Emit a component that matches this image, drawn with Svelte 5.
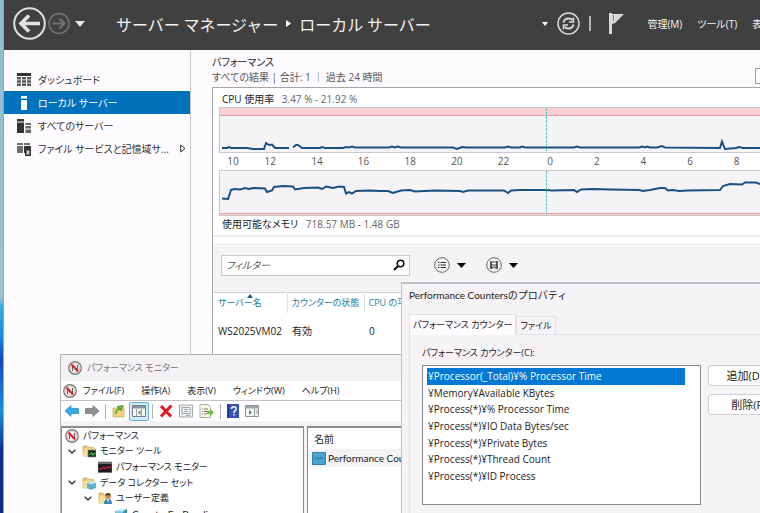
<script>
  const hours = ['10', '12', '14', '16', '18', '20', '22', '0', '2', '4', '6', '8'];

  const cpuLine =
    'M2 40 7 40 9 39 11 40 27 40 33 41 44 41 46 35 49 37 52 36.5 55 40 69 40M73 39.500 76 37 78 37 82 40 100 40 102 39 105 40 123 40 126 39 129 39.500 132 38.500 135 39.500 169 39.500 172 38.500 175 39.500 178 38.500 181 39.500 233 39.500 237 41 242 39 246 39.500 285 39.500 288 38.500 291 39.500 300 39.500 302 38.500 305 39.500 354 39.500 357 38.500 360 39.500 419 39.500 422 38.500 425 39.500 427 38.500 430 39.500 437 39.500 442 38 445 39.500 500 40 502 33.500 505 41 516 40 519 39 523 40 540 40';

  const memoryLine =
    'M2 27.500 8 28 11 19 14 18 20 18.500 25 17 29 18 33 17 45 17.500 47 21 52 19.500 54 16 63 15 73 15.500 75 18.500 84 17 98 16.500 102 18 106 15.500 113 17 119 15.500 124 16 126 22.500 129 21 132 22.500 136 20 150 19.500 160 20 168 20 173 22 181 19.500 190 19 195 20.500 215 19.500 240 20 243 21 248 19.500 284 19.500 288 22 291 19.500 300 19 326 19 332 19.500 354 19 357 21 361 18.500 372 18 390 18.500 419 19 423 20 430 19 440 17 445 17 448 19.500 453 19 459 20 468 19.500 500 19 503 15 510 13 522 13.500 525 11.500 536 11.500 540 13';

  const navItems = [
    { label: 'ダッシュボード', icon: 'dashboard' },
    { label: 'ローカル サーバー', icon: 'server', selected: true },
    { label: 'すべてのサーバー', icon: 'servers' },
    { label: 'ファイル サービスと記憶域サ...', icon: 'files', more: true }
  ];

  const counters = [
    '¥Processor(_Total)¥% Processor Time',
    '¥Memory¥Available KBytes',
    '¥Process(*)¥% Processor Time',
    '¥Process(*)¥IO Data Bytes/sec',
    '¥Process(*)¥Private Bytes',
    '¥Process(*)¥Thread Count',
    '¥Process(*)¥ID Process'
  ];
  let selectedCounter = $state(0);

  const tree = [
    { label: 'パフォーマンス', icon: 'perf', depth: 'root' },
    { label: 'モニター ツール', icon: 'folderMonitor', depth: 'one', open: true },
    { label: 'パフォーマンス モニター', icon: 'graph', depth: 'two' },
    { label: 'データ コレクター セット', icon: 'folderData', depth: 'one', open: true },
    { label: 'ユーザー定義', icon: 'user', depth: 'two', open: true },
    { label: 'CounterForBaseline', icon: 'set', depth: 'three' }
  ];

  const menus = ['ファイル(F)', '操作(A)', '表示(V)', 'ウィンドウ(W)', 'ヘルプ(H)'];
</script>

{#snippet perfIcon()}
  <svg width="14" height="14" viewBox="0 0 14 14" aria-hidden="true">
    <circle cx="7" cy="7" r="6.300" fill="#f4f1ee" stroke="#77736f" stroke-width="1.200" />
    <circle cx="7" cy="7" r="4.800" fill="none" stroke="#bdb6b0" stroke-width=".7" />
    <path d="M4.500 10V4.500M4.500 4 9.500 10M9.500 10V4" fill="none" stroke="#46524a" stroke-width=".9" />
    <path d="M3.500 3.500 10 10.500" stroke="#e01a24" stroke-width="2" />
  </svg>
{/snippet}

{#snippet folder()}
  <path d="M1 2h4l1 1.500h6V12H1z" fill="#e9c46c" stroke="#c8a24e" stroke-width=".6" />
  <path d="M2 4.500h10V12H1z" fill="#f8df98" />
{/snippet}

{#snippet treeIcon(name)}
  {#if name === 'perf'}
    {@render perfIcon()}
  {:else}
    <svg width="14" height="14" viewBox="0 0 14 14" aria-hidden="true">
      {#if name === 'folderMonitor'}
        {@render folder()}
        <path d="M6 6h8v7H6z" fill="#1b2c22" stroke="#76847a" stroke-width=".7" />
        <path d="M7 10.500h1.500l1-2 1.500 3 1-2h1.500" fill="none" stroke="#38d64c" />
      {:else if name === 'graph'}
        <path d="M0 2h14v10.500H0z" fill="#241a22" stroke="#6d6a70" stroke-width=".7" />
        <path d="M0 2h14v2H0z" fill="#6c6a72" />
        <path d="M1 9h3l1.500-2L7 9l2-2 2 1 2-2" fill="none" stroke="#e8323c" />
      {:else if name === 'folderData'}
        {@render folder()}
        <path d="M5 7l5-1.500 4 1.500v5l-5 2-4-2z" fill="#58b3cf" />
        <path d="M5 7l5-1.500L14 7 9 8.500z" fill="#bfe9f3" />
      {:else if name === 'user'}
        {@render folder()}
        <path d="M6 13q0-5 4-5t4 5z" fill="#2e86bd" />
        <path d="M9 8h2l-1 4z" fill="#fff" />
        <circle cx="10" cy="5.500" r="2.600" fill="#c98a54" />
        <path d="M7.300 5q0-3 2.700-3t2.700 3L10 4z" fill="#4e3224" />
      {:else}
        <path d="M1 4l6-2h6v9l-5 2H1z" fill="#7cc7de" />
        <path d="M1 4l6-2h6L9 4.500z" fill="#c2edf5" />
        <path d="M9 4.500 13 2v9l-5 2z" fill="#3d93b3" />
      {/if}
    </svg>
  {/if}
{/snippet}

{#snippet navIcon(name)}
  <svg width="15" height="14" viewBox="0 0 15 14" fill="currentColor" aria-hidden="true">
    {#if name === 'dashboard'}
      <path d="M0 0h14v3H0z" />
      <path d="M0 4h4v2.500H0zM5 4h4v2.500H5zM10 4h4v2.500h-4zM0 7.300h4v2.500H0zM5 7.300h4v2.500H5zM10 7.300h4v2.500h-4zM0 10.600h4V13H0zM5 10.600h4V13H5zM10 10.600h4V13h-4z" opacity=".8" />
    {:else if name === 'server'}
      <path d="M4 0h6v2.500H4zM4 4h6v10H4z" />
    {:else if name === 'servers'}
      <path d="M0 0h7v2.500H0zM0 3.500h7V14H0z" />
      <path d="M8.500 4H14v2H8.500zM8.500 7H14v2.500H8.500zM8.500 10.500H14V14H8.500z" opacity=".75" />
    {:else}
      <path d="M0 1h6v2H0zM0 4h6v7H0zM7 1h6v2H7z" opacity=".7" />
      <path d="M7 4h7v10H8v-3H7z" />
      <path d="M9.500 8.500h3v4h-3z" fill="#fff" opacity=".75" />
    {/if}
  </svg>
{/snippet}

{#snippet chart(kind)}
  <svg class="chart" viewBox="0 0 540 44" preserveAspectRatio="none" aria-hidden="true">
    {#if kind === 'cpu'}
      <path d="M0 0h540v7H0z" fill="#f9cfd1" />
      <path d="M0 7.500h540" stroke="#e4a0a5" />
      <path class="trace" d={cpuLine} />
    {:else}
      <path d="M0 42h540v2H0z" fill="#f9cfd1" />
      <path d="M0 42.500h540" stroke="#eaa0a6" />
      <path class="trace" d={memoryLine} />
    {/if}
    <path d="M326.500 0v44" stroke="#5fc4c4" stroke-dasharray="3 1" />
  </svg>
{/snippet}

<div class="desktop">
  <div class="wallpaper"></div>
  <div class="manager">
    <header>
      <button class="plain" aria-label="戻る">
        <svg width="33" height="33" viewBox="0 0 33 33" fill="none" stroke="#e2e2e2">
          <circle cx="16.500" cy="16.500" r="15.300" stroke-width="2" />
          <path d="M27 16.500H8M16 8.500l-8 8 8 8" stroke-width="3.600" />
        </svg>
      </button>
      <button class="plain" aria-label="進む">
        <svg width="22" height="23" viewBox="0 0 22 23" fill="none" stroke="#747474">
          <circle cx="11" cy="11.500" r="10" stroke-width="1.500" />
          <path d="M4.500 11.500h12M11.500 6.500l5 5-5 5" stroke-width="2" />
        </svg>
      </button>
      <button class="plain history" aria-label="履歴">
        <svg width="10" height="6" viewBox="0 0 10 6"><path d="M0 0h10L5 6z" fill="#e8e8e8" /></svg>
      </button>
      <h1>
        <span>サーバー マネージャー</span>
        <svg width="5" height="7" viewBox="0 0 5 7" aria-hidden="true"><path d="M0 0l5 3.500L0 7z" fill="#fff" /></svg>
        <span>ローカル サーバー</span>
      </h1>
      <div class="actions">
        <svg width="6" height="4" viewBox="0 0 6 4" aria-hidden="true"><path d="M0 0h6L3 4z" fill="#fff" /></svg>
        <button class="plain" aria-label="最新の情報に更新">
          <svg width="23" height="23" viewBox="0 0 23 23" fill="none" stroke="#d9d9d9">
            <circle cx="11.500" cy="11.500" r="10.500" stroke-width="1.500" />
            <path d="M6.500 10.500q1-4 5-4 2.500 0 4 1.500M16.500 12.500q-1 4-5 4-2.500 0-4-1.500" stroke-width="2" />
            <path d="M16.500 5.500v4.500H12M6.500 17.500V13H11" stroke-width="1.500" />
          </svg>
        </button>
        <span class="bar"></span>
        <button class="plain flag" aria-label="通知">
          <svg width="15" height="21" viewBox="0 0 15 21" fill="#d9d9d9"><path d="M0 0h3v21H0zM3 1h12L6 10 3 11z" /><path d="M4.500 2v6" stroke="#888" /></svg>
        </button>
        <nav>
          <button class="plain">管理(M)</button>
          <button class="plain">ツール(T)</button>
          <button class="plain">表示(V)</button>
        </nav>
      </div>
    </header>

    <div class="workspace">
      <nav class="sidebar">
        {#each navItems as item}
          <a href="#{item.icon}" class:selected={item.selected}>
            {@render navIcon(item.icon)}
            <span>{item.label}</span>
            {#if item.more}
              <svg class="more" width="6" height="9" viewBox="0 0 6 9" fill="none" stroke="#333"><path d="M.7 1l4.300 3.500L.7 8z" /></svg>
            {/if}
          </a>
        {/each}
      </nav>

      <main>
        <div class="heading">
          <div>
            <h2>パフォーマンス</h2>
            <p>すべての結果 | 合計: 1 ｜ 過去 24 時間</p>
          </div>
          <button class="tasks" aria-label="タスク"></button>
        </div>
        <section class="panel">
          <div class="charts">
            <p class="metric"><b>CPU 使用率</b> 3.47 % - 21.92 %</p>
            {@render chart('cpu')}
            <div class="hours">
              {#each hours as hour}<span>{hour}</span>{/each}
            </div>
            {@render chart('memory')}
            <p class="metric"><b>使用可能なメモリ</b> 718.57 MB - 1.48 GB</p>
          </div>
          <div class="filters">
            <label class="filter">
              <input type="text" placeholder="フィルター" aria-label="フィルター" />
              <svg width="12" height="12" viewBox="0 0 12 12" fill="none" stroke="#111"><circle cx="7.500" cy="4.500" r="3.300" stroke-width="1.600" /><path d="M5 7 1 11" stroke-width="2.200" /></svg>
            </label>
            <button class="plain round" aria-label="グループ">
              <svg width="16" height="16" viewBox="0 0 16 16" fill="none" stroke="#666">
                <circle cx="8" cy="8" r="7.300" />
                <path d="M4 5.500h1.500M4 8h1.500M4 10.500h1.500M6.500 5.500H12M6.500 8H12M6.500 10.500H12" stroke="#333" stroke-width="1.200" />
              </svg>
              <svg width="9" height="5" viewBox="0 0 9 5"><path d="M0 0h9L4.500 5z" /></svg>
            </button>
            <button class="plain round" aria-label="クエリの保存">
              <svg width="16" height="16" viewBox="0 0 16 16" fill="none" stroke="#666">
                <circle cx="8" cy="8" r="7.300" />
                <path d="M5 4v8M11 4v8" stroke="#333" stroke-width="1.600" />
                <path d="M5 8h6M6 5h4M6.500 11.500V10h3v1.500" stroke="#444" />
              </svg>
              <svg width="9" height="5" viewBox="0 0 9 5"><path d="M0 0h9L4.500 5z" /></svg>
            </button>
          </div>
          <table>
            <thead>
              <tr>
                <th class="name">サーバー名<svg width="6" height="4" viewBox="0 0 6 4" aria-hidden="true"><path d="M0 4h6L3 0z" fill="#17607c" /></svg></th>
                <th class="state">カウンターの状態</th>
                <th>CPU の平均</th>
              </tr>
            </thead>
            <tbody>
              <tr><td>WS2025VM02</td><td>有効</td><td>0</td></tr>
            </tbody>
          </table>
        </section>
      </main>
    </div>
  </div>

  <section class="monitor">
    <div class="caption">{@render perfIcon()}<span>パフォーマンス モニター</span></div>
    <div class="menubar">
      {@render perfIcon()}
      {#each menus as menu}<button class="plain">{menu}</button>{/each}
    </div>
    <div class="toolbar">
      <button class="plain" aria-label="戻る"><svg width="14" height="12" viewBox="0 0 14 12"><path d="M0 6l6-5.500V3.500h7.500v5H6v3z" fill="#35aee6" stroke="#2584b8" stroke-width=".7" /></svg></button>
      <button class="plain" aria-label="進む"><svg width="14" height="12" viewBox="0 0 14 12"><path d="M14 6L8 .5v3H.5v5H8v3z" fill="#8e9092" stroke="#6e7072" stroke-width=".7" /></svg></button>
      <span class="rule"></span>
      <button class="plain" aria-label="上へ"><svg width="14" height="14" viewBox="0 0 14 14"><path d="M1 4h4l1-2h6v11H1z" fill="#f0d07b" stroke="#c8a862" stroke-width=".7" /><path d="M4 10q0-5 4-5M6 3l4-1-1 4z" fill="none" stroke="#4da334" stroke-width="1.600" /></svg></button>
      <button class="plain pressed" aria-label="ツリーの表示"><svg width="14" height="12" viewBox="0 0 14 12"><path d="M.5.5h13v11H.5z" fill="#f5f5f5" stroke="#77838b" /><path d="M1 1h12v2.500H1z" fill="#87949c" /><path d="M4.500 4v7M9.500 4v7" stroke="#9aa5ad" /><path d="M8.500 5v5L6 7.500z" fill="#3c9f3d" /></svg></button>
      <span class="rule"></span>
      <button class="plain" aria-label="削除"><svg width="14" height="14" viewBox="0 0 14 14"><path d="M2 2l10 10.500M12.500 1.500 2 12.500" stroke="#d91f2b" stroke-width="3.200" /></svg></button>
      <button class="plain" aria-label="プロパティ"><svg width="14" height="14" viewBox="0 0 14 14"><path d="M.5 1h13v12H.5z" fill="#eef0f2" stroke="#a2a8ae" /><path d="M3 3.500h8v6H3zM5 5.500h4M5 7.500h4M7 11.500h4" fill="none" stroke="#9ba6ae" /></svg></button>
      <button class="plain" aria-label="エクスポート"><svg width="15" height="14" viewBox="0 0 15 14"><path d="M1 .5h8l2.500 3v10H1z" fill="#faf6e6" stroke="#b4ad96" /><path d="M3 5h1M3 7.500h1M3 10h1M5 5h4M5 7.500h3M5 10h3" stroke="#777" /><path d="M8 7h3V4.500L15 8.500l-4 4V10H8z" fill="#6cc043" /></svg></button>
      <span class="rule"></span>
      <button class="plain" aria-label="ヘルプ"><svg width="12" height="14" viewBox="0 0 12 14"><path d="M0 0h12v14H0z" fill="#3656b7" /><path d="M0 0h2v14H0z" fill="#213b8d" /><path d="M4.500 5q0-2.300 2.300-2.300T9 5q0 1.300-1.200 2Q7 7.500 7 9M7 10v1.600" fill="none" stroke="#fff" stroke-width="1.500" /></svg></button>
      <button class="plain" aria-label="操作ウィンドウ"><svg width="14" height="12" viewBox="0 0 14 12"><path d="M.5.5h13v11H.5z" fill="#f5f5f5" stroke="#8b9499" /><path d="M1 1h12v2.500H1z" fill="#99a4aa" /><path d="M9.500 4v7M11 6h2M11 8h2" stroke="#8b989f" /><path d="M4 5v5l3-2.500z" fill="#3c9f3d" /></svg></button>
    </div>
    <div class="panes">
      <ul class="tree">
        {#each tree as node}
          <li class={node.depth}>
            {#if node.depth !== 'root'}
              <span class="twist">
                {#if node.open}<svg width="8" height="5" viewBox="0 0 8 5"><path d="M.7.7 4 4 7.300.7" fill="none" stroke="#333" stroke-width="1.400" /></svg>{/if}
              </span>
            {/if}
            {@render treeIcon(node.icon)}
            <span>{node.label}</span>
          </li>
        {/each}
      </ul>
      <div class="details">
        <div class="column">名前</div>
        <div class="entry">
          <svg width="14" height="13" viewBox="0 0 14 13" aria-hidden="true"><path d="M.5.5h13v12H.5z" fill="#4aa3cf" stroke="#347fa8" /><path d="M3 7l2-1.500L7 7l2-1.500L11 7" fill="none" stroke="#226a93" /></svg>
          <span>Performance Counters</span>
        </div>
      </div>
    </div>
  </section>

  <section class="dialog">
    <h3>Performance Countersのプロパティ</h3>
    <div class="tabs" role="tablist">
      <button role="tab" aria-selected="true">パフォーマンス カウンター</button>
      <button role="tab" aria-selected="false">ファイル</button>
    </div>
    <div class="sheet">
      <p id="counters-label">パフォーマンス カウンター(C):</p>
      <div class="chooser">
        <div class="listbox">
          <ul role="listbox" aria-labelledby="counters-label">
            {#each counters as counter, i}
              <li role="option" aria-selected={selectedCounter === i}>
                <button class="plain" onclick={() => (selectedCounter = i)}>{counter}</button>
              </li>
            {/each}
          </ul>
        </div>
        <div class="commands">
          <button>追加(D)...</button>
          <button>削除(R)</button>
        </div>
      </div>
    </div>
  </section>
</div>

<style>
  :global(body) { margin: 0; }
  .desktop {
    position: relative;
    display: flex;
    height: 100vh;
    overflow: hidden;
    font: 10px/16px "Open Sans", "Noto Sans CJK JP", sans-serif;
    font-feature-settings: "palt";
    color: #1c1c1c;
  }
  .desktop * { box-sizing: border-box; }
  :where(h1, h2, h3, p, ul) { margin: 0; padding: 0; font-weight: 400; list-style: none; }
  button, input { font: inherit; font-feature-settings: inherit; color: inherit; }
  svg { flex: none; display: block; }
  .plain { border: 0; padding: 0; background: none; white-space: nowrap; }

  .wallpaper {
    flex: none;
    width: 4px;
    border-right: 1px solid #8fa9b8;
    background: linear-gradient(#8fbdd4 0, #9cc2d6 58%, #2fa9d8 60%, #1b86e6 66%, #1546bd 70%, #1a8fd6 80%, #0b2f91 88%, #0b2a84);
  }
  .manager { flex: 1; min-width: 0; display: flex; flex-direction: column; background: #fefbff; }

  header { display: flex; align-items: center; height: 50px; flex: none; padding: 0 0 3px 9px; background: #404040; color: #f4f4f4; }
  header > .plain { margin-right: 2px; }
  header > .history { margin: 0 0 0 3px; }
  h1 { display: flex; align-items: center; gap: 8px; margin-left: 31px; font: 400 16px/28px "Noto Sans CJK JP", sans-serif; white-space: nowrap; }
  .actions { display: flex; align-items: center; margin: 0 -24px 0 auto; }
  .actions > .plain { margin-left: 9px; }
  .bar { width: 2px; height: 15px; margin-left: 9px; background: #b5b5b5; }
  .actions > .flag { margin-left: 18px; }
  .actions nav { display: flex; gap: 15px; margin-left: 23px; }

  .workspace { display: flex; flex: 1; min-height: 0; }
  .sidebar { flex: none; width: 187px; padding-top: 18px; border-right: 1px solid #c9c7cb; color: #333; }
  .sidebar a { display: flex; align-items: center; gap: 6px; height: 23px; padding-left: 13px; color: inherit; text-decoration: none; white-space: nowrap; }
  .sidebar .selected { background: #0072bc; color: #fff; }
  .more { margin-left: auto; margin-right: 4px; }

  main { flex: 1; min-width: 0; padding: 5px 0 0 21px; }
  .heading { display: flex; justify-content: space-between; align-items: flex-end; height: 32px; color: #555; }
  .heading > div { height: 32px; }
  h2 { font-size: 10px; line-height: 15px; color: #222; }
  .heading p { line-height: 15px; white-space: nowrap; }
  .tasks { width: 60px; height: 16px; margin: 0 -55px 3px 0; border: 1px solid #999; background: #fff; }
  .panel { height: 268px; border: 1px solid #a8a6aa; border-width: 1px 0 1px 1px; background: #fff; }
  .charts { padding: 3px 0 3px 6px; border-bottom: 2px solid #ececf0; }
  .metric { height: 16px; padding-left: 3px; color: #666; line-height: 17px; white-space: nowrap; }
  .metric b { margin-right: 5px; font-weight: 400; color: #222; }
  .chart { width: 100%; height: 46px; border: 1px solid #cac8cc; border-right: 0; background: #f6f3f7; }
  .trace { fill: none; stroke: #1b5180; stroke-width: 2; vector-effect: non-scaling-stroke; }
  .hours { display: grid; grid-template-columns: 28px repeat(11, 1fr); height: 17px; color: #555; text-align: center; line-height: 17px; }
  .filters { display: flex; align-items: center; gap: 24px; height: 49px; margin-top: 6px; padding: 0 0 5px 8px; background: #f6f3f7; }
  .filter { display: flex; align-items: center; width: 189px; height: 21px; padding-right: 4px; border: 1px solid #c8c6ca; background: #fff; }
  .filter input { flex: 1; min-width: 0; padding: 0 4px; border: 0; outline: 0; background: none; }
  .filter input::placeholder { color: #555; font-style: italic; opacity: 1; }
  .round { display: flex; align-items: center; gap: 7px; }
  .round + .round { margin-left: -4px; }
  table { width: 100%; border-collapse: collapse; table-layout: fixed; border-top: 1px solid #d2d0d4; background: #fff; }
  th, td { padding: 0 0 0 5px; font-weight: 400; text-align: left; white-space: nowrap; }
  th { position: relative; height: 20px; padding-left: 4px; color: #1a7fa0; font-size: 9px; border-left: 1px solid #e2e0e4; }
  th svg { position: absolute; left: 34px; top: 1px; }
  td { height: 36px; }
  .name { width: 74px; padding-left: 5px; border-left: 0; }
  .state { width: 77px; }

  .monitor { position: absolute; left: 60px; right: 100px; top: 354px; display: flex; flex-direction: column; height: 240px; border: 1px solid #b5b3b7; background: #f5f2f6; font-size: 9px; }
  .caption { display: flex; align-items: center; gap: 5px; height: 26px; padding-left: 7px; color: #777; }
  .menubar { display: flex; align-items: center; gap: 17px; height: 20px; padding-left: 2px; border-bottom: 1px solid #c4c2c6; background: #fff; }
  .menubar > :global(svg) { margin-right: -11px; }
  .toolbar { display: flex; align-items: center; gap: 6px; height: 20px; padding-left: 4px; background: #fff; }
  .toolbar .pressed { height: 19px; margin: 0 -3px; padding: 0 2px; border: 1px solid #67b4dc; border-radius: 2px; background: #cfeafa; }
  .rule { width: 1px; height: 15px; background: #b4b2b6; }
  .panes { display: flex; flex: 1; gap: 3px; margin-top: 5px; }
  .tree { display: flex; flex-direction: column; width: 243px; border: 1px solid #8c8a8e; border-width: 2px 1px 0; background: #fff; }
  .tree li { display: flex; align-items: center; gap: 4px; flex: none; height: calc(94px / 6); white-space: nowrap; }
  .tree .root { padding-left: 3px; }
  .tree .one { padding-left: 6px; }
  .tree .two { padding-left: 22px; }
  .tree .three { padding-left: 38px; font: 10px/16px Lato, sans-serif; }
  .twist { width: 10px; }
  .details { flex: 1; border: 1px solid #8c8a8e; border-width: 2px 0 0 1px; background: #fff; white-space: nowrap; }
  .column { height: 21px; padding: 3px 0 0 6px; font-size: 10px; }
  .entry { display: flex; align-items: center; gap: 2px; height: 18px; padding-left: 4px; background: #f6f3f7; font: 10px/16px Lato, sans-serif; }

  .dialog { position: absolute; left: 401px; right: -50px; top: 282px; height: 260px; padding: 3px 9px 0 7px; border: 2px solid #c2c0c4; border-width: 2px 1px 1px; background: #f6f3f7; font-size: 9px; }
  h3 { font: 10px/16px Lato, "Noto Sans CJK JP", sans-serif; }
  .tabs { display: flex; align-items: flex-end; height: 31px; padding-top: 9px; }
  .tabs button { height: 18px; padding: 0 3px; border: 1px solid #e2e0e4; border-bottom: 0; background: #f6f3f7; line-height: 16px; white-space: nowrap; }
  .tabs [aria-selected="true"] { height: 21px; margin-bottom: -1px; background: #fdfbfe; }
  .sheet { padding: 10px 9px 0 12px; border: 1px solid #e4e2e6; height: 200px; }
  .sheet p { height: 20px; }
  .chooser { display: flex; gap: 7px; align-items: flex-start; }
  .listbox { flex: 1; height: 140px; padding: 2px 15px 0 4px; border: 1px solid #8a888c; background: #fff; font-size: 10px; }
  .listbox ul { display: flex; flex-direction: column; height: 116px; }
  .listbox li { display: flex; flex: 1; }
  .listbox li button { flex: 1; padding-left: 1px; line-height: 16px; text-align: left; }
  .listbox [aria-selected="true"] { background: #0078d4; color: #fff; }
  .commands { display: flex; flex-direction: column; gap: 8px; width: 82px; }
  .commands button { height: 21px; padding: 0; border: 1px solid #d0ced2; border-radius: 3px; background: #fefdff; font-size: 11px; line-height: 18px; }
</style>
